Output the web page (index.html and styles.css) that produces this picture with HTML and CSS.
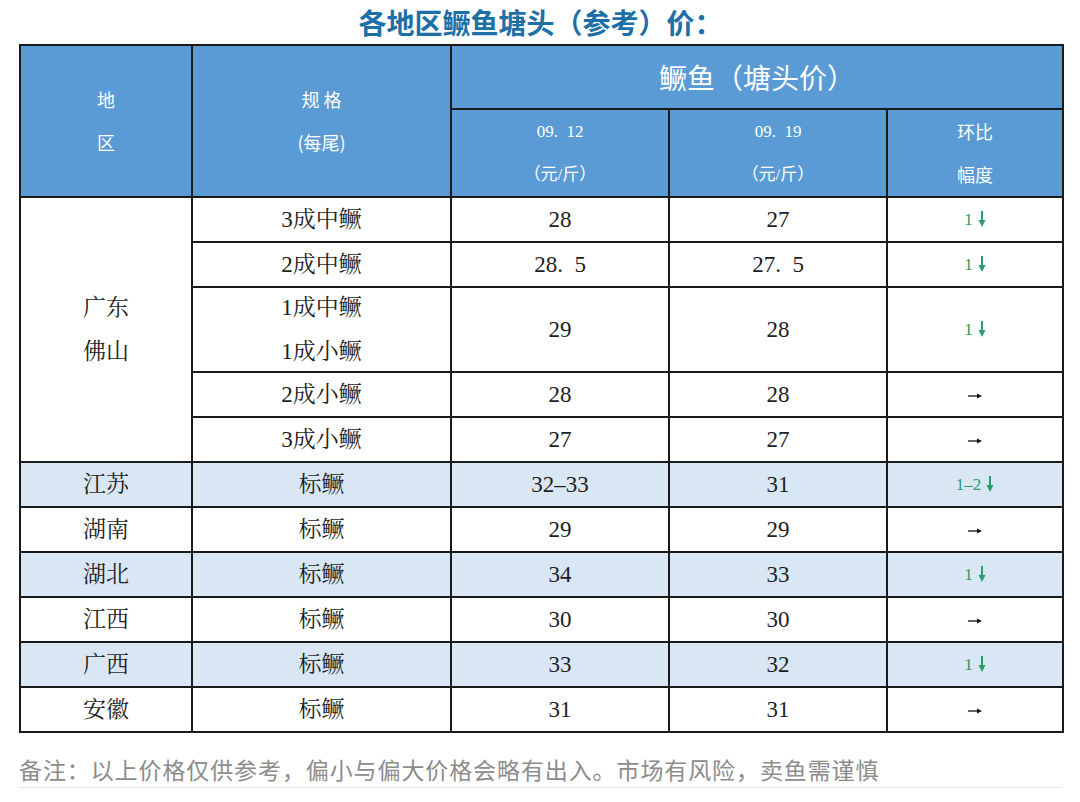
FILE: index.html
```html
<!DOCTYPE html>
<html lang="zh">
<head>
<meta charset="utf-8">
<title>各地区鳜鱼塘头（参考）价</title>
<link rel="stylesheet" href="styles.css">
</head>
<body>
<div class="page">
  <h1 class="title">各地区鳜鱼塘头（参考）价：</h1>
  <table class="price">
    <colgroup>
      <col class="c-region"><col class="c-spec"><col class="c-p1"><col class="c-p2"><col class="c-chg">
    </colgroup>
    <thead>
      <tr class="h1">
        <th rowspan="2" class="hb">地<br>区</th>
        <th rowspan="2" class="hb">规 格<br>(每尾)</th>
        <th colspan="3" class="big">鳜鱼（塘头价）</th>
      </tr>
      <tr class="h2">
        <th class="hs">09.&ensp;12<br>（元/斤）</th>
        <th class="hs">09.&ensp;19<br>（元/斤）</th>
        <th class="hb">环比<br>幅度</th>
      </tr>
    </thead>
    <tbody>
      <tr class="r">
        <td rowspan="5" class="two">广东<br>佛山</td>
        <td>3成中鳜</td><td>28</td><td>27</td>
        <td class="dn">1<svg class="darr" viewBox="0 0 8 16"><path d="M4 0v10"/><polygon points="0.5,9 7.5,9 4,16"/></svg></td>
      </tr>
      <tr class="r"><td>2成中鳜</td><td>28.&ensp;5</td><td>27.&ensp;5</td>
        <td class="dn">1<svg class="darr" viewBox="0 0 8 16"><path d="M4 0v10"/><polygon points="0.5,9 7.5,9 4,16"/></svg></td></tr>
      <tr class="rr"><td><div class="stack">1成中鳜<br>1成小鳜</div></td><td>29</td><td>28</td>
        <td class="dn">1<svg class="darr" viewBox="0 0 8 16"><path d="M4 0v10"/><polygon points="0.5,9 7.5,9 4,16"/></svg></td></tr>
      <tr class="r"><td>2成小鳜</td><td>28</td><td>28</td>
        <td><svg class="rarr" viewBox="0 0 14 6"><path d="M0 3h10"/><polygon points="9,0.5 14,3 9,5.5"/></svg></td></tr>
      <tr class="r"><td>3成小鳜</td><td>27</td><td>27</td>
        <td><svg class="rarr" viewBox="0 0 14 6"><path d="M0 3h10"/><polygon points="9,0.5 14,3 9,5.5"/></svg></td></tr>
      <tr class="r alt"><td>江苏</td><td>标鳜</td><td>32–33</td><td>31</td>
        <td class="dn">1–2<svg class="darr" viewBox="0 0 8 16"><path d="M4 0v10"/><polygon points="0.5,9 7.5,9 4,16"/></svg></td></tr>
      <tr class="r"><td>湖南</td><td>标鳜</td><td>29</td><td>29</td>
        <td><svg class="rarr" viewBox="0 0 14 6"><path d="M0 3h10"/><polygon points="9,0.5 14,3 9,5.5"/></svg></td></tr>
      <tr class="r alt"><td>湖北</td><td>标鳜</td><td>34</td><td>33</td>
        <td class="dn">1<svg class="darr" viewBox="0 0 8 16"><path d="M4 0v10"/><polygon points="0.5,9 7.5,9 4,16"/></svg></td></tr>
      <tr class="r"><td>江西</td><td>标鳜</td><td>30</td><td>30</td>
        <td><svg class="rarr" viewBox="0 0 14 6"><path d="M0 3h10"/><polygon points="9,0.5 14,3 9,5.5"/></svg></td></tr>
      <tr class="r alt"><td>广西</td><td>标鳜</td><td>33</td><td>32</td>
        <td class="dn">1<svg class="darr" viewBox="0 0 8 16"><path d="M4 0v10"/><polygon points="0.5,9 7.5,9 4,16"/></svg></td></tr>
      <tr class="r"><td>安徽</td><td>标鳜</td><td>31</td><td>31</td>
        <td><svg class="rarr" viewBox="0 0 14 6"><path d="M0 3h10"/><polygon points="9,0.5 14,3 9,5.5"/></svg></td></tr>
    </tbody>
  </table>
  <p class="note">备注：以上价格仅供参考，偏小与偏大价格会略有出入。市场有风险，卖鱼需谨慎</p>
</div>
</body>
</html>
```

FILE: styles.css
```css
* { box-sizing: border-box; }
html, body { margin: 0; padding: 0; background: #ffffff; }
body { font-family: "Liberation Serif", "Noto Serif CJK SC", "Noto Sans CJK SC", serif; color: #1a1a1a; }
.page { width: 1080px; padding-left: 19px; }
.title {
  margin: 0;
  width: 1043px;
  height: 44px;
  line-height: 44px;
  text-align: center;
  font-family: "Noto Sans CJK SC", sans-serif;
  font-size: 28px;
  font-weight: 700;
  color: #1d6fa7;
}
.price {
  width: 1043px;
  table-layout: fixed;
  border-collapse: collapse;
  border: 2px solid #1a1a1a;
}
.c-region { width: 172px; }
.c-spec { width: 259px; }
.c-p1 { width: 218px; }
.c-p2 { width: 218px; }
.c-chg { width: 176px; }
.price th, .price td {
  border: 2px solid #1a1a1a;
  text-align: center;
  vertical-align: middle;
  padding: 0;
}
.price th {
  background: #5b9bd5;
  color: #ffffff;
  font-weight: 400;
}
.h1 { height: 64px; }
.h2 { height: 88px; }
.hb {
  font-family: "Noto Sans CJK SC", sans-serif;
  font-size: 18px;
  font-weight: 700;
  line-height: 43px;
}
.hs {
  font-family: "Liberation Serif", "Noto Sans CJK SC", serif;
  font-size: 17px;
  line-height: 43px;
}
.big {
  font-family: "Noto Sans CJK SC", sans-serif;
  font-size: 28px;
  font-weight: 300;
}
.price td {
  font-size: 23px;
  line-height: 30px;
  color: #1e1e1e;
}
.r { height: 45px; }
.rr { height: 85px; }
.price td.two { line-height: 44px; }
.stack {
  height: 80px;
  line-height: 44px;
  display: flex;
  flex-direction: column;
  justify-content: center;
}
.alt td { background: #d9e7f5; }
.price td.dn {
  color: #2a9d68;
  font-size: 17px;
}
.darr {
  width: 8px;
  height: 16px;
  margin-left: 5px;
  vertical-align: -2px;
}
.darr path { stroke: #2a9d68; stroke-width: 2; fill: none; }
.darr polygon { fill: #2a9d68; }
.rarr {
  width: 14px;
  height: 6px;
  vertical-align: middle;
}
.rarr path { stroke: #111; stroke-width: 1.3; fill: none; }
.rarr polygon { fill: #111; }
.note {
  margin: 21px 0 0 0;
  width: 1043px;
  padding-bottom: 3px;
  font-family: "Noto Sans CJK SC", sans-serif;
  font-size: 23px;
  line-height: 30px;
  letter-spacing: 0.9px;
  color: #8c8c8c;
  border-bottom: 1px solid #e6e6e6;
}
```
